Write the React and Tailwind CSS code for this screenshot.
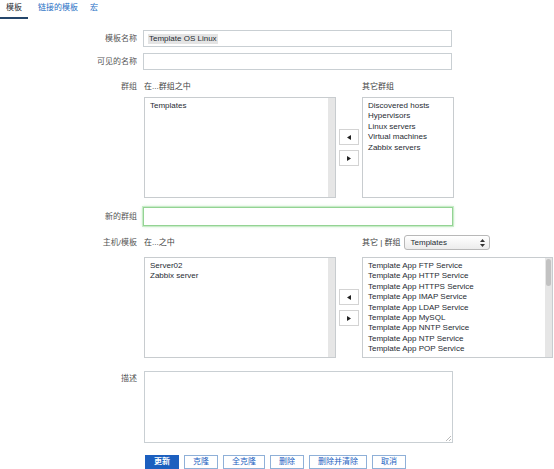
import React from "react";

const groupsIn = ["Templates"];
const groupsOther = ["Discovered hosts", "Hypervisors", "Linux servers", "Virtual machines", "Zabbix servers"];
const hostsIn = ["Server02", "Zabbix server"];
const hostsOther = [
  "Template App FTP Service",
  "Template App HTTP Service",
  "Template App HTTPS Service",
  "Template App IMAP Service",
  "Template App LDAP Service",
  "Template App MySQL",
  "Template App NNTP Service",
  "Template App NTP Service",
  "Template App POP Service",
  "Template App SMTP Service",
];

const Label = ({ children, className = "" }) => (
  <div className={`w-[137px] shrink-0 text-right text-[#555] ${className}`}>{children}</div>
);

const ListBox = ({ items, width, track = true, thumb = false }) => (
  <div className={`relative h-[101px] ${width} shrink-0 overflow-hidden border border-[#c8cccf] bg-white`}>
    <div className="pl-[5px] pt-[3px] leading-[10.4px] text-[#1f2c33]">
      {items.map((it) => (
        <div key={it} className="whitespace-nowrap">{it}</div>
      ))}
    </div>
    {track && <div className="absolute right-0 top-0 h-full w-[7px] bg-[#e6e6e6]" />}
    {thumb && <div className="absolute right-[1px] top-[1px] h-[27px] w-[5px] rounded-[3px] bg-[#c2c2c2]" />}
  </div>
);

const ArrowBtn = ({ dir }) => (
  <div className="flex h-[16px] w-[20px] items-center justify-center border border-[#d3d3d3] bg-white">
    <svg width="4" height="5" viewBox="0 0 4 5">
      {dir === "left" ? <polygon points="4,0 4,5 0,2.5" fill="#222" /> : <polygon points="0,0 0,5 4,2.5" fill="#222" />}
    </svg>
  </div>
);

const Mover = () => (
  <div className="flex w-[26px] shrink-0 flex-col items-center justify-center gap-[5px]">
    <ArrowBtn dir="left" />
    <ArrowBtn dir="right" />
  </div>
);

const Btn = ({ children, primary }) => (
  <div
    className={
      primary
        ? "h-[14px] border border-[#1c5fbf] bg-[#1c5fbf] px-[8px] leading-[12px] font-bold text-white"
        : "h-[14px] border border-[#8fb0d8] bg-white px-[8px] leading-[12px] text-[#1c5fbf]"
    }
  >
    {children}
  </div>
);

export default function App() {
  return (
    <div className="h-[469px] w-[554px] overflow-hidden bg-white font-['Liberation_Sans','Noto_Sans_CJK_SC',sans-serif] text-[8px] leading-[10px] text-[#1f2c33]">
      {/* tabs */}
      <div className="flex h-[19px] items-start">
        <div className="h-[19px] border-b-2 border-[#24466b] px-[6px] pt-[3px] text-[#1f2c33]">模板</div>
        <div className="ml-[10px] pt-[3px] text-[#1f6fc5]">链接的模板</div>
        <div className="ml-[12px] pt-[3px] text-[#1f6fc5]">宏</div>
      </div>

      {/* template name */}
      <div className="mt-[11px] flex items-center gap-[6px]">
        <Label>模板名称</Label>
        <div className="flex h-[17px] w-[309px] items-center border border-[#c9cfd3] bg-white pl-[4px]">
          <span className="bg-[#e4e4e4] px-[1px]">Template OS Linux</span>
        </div>
      </div>

      {/* visible name */}
      <div className="mt-[6px] flex items-center gap-[6px]">
        <Label>可见的名称</Label>
        <div className="h-[17px] w-[309px] border border-[#c9cfd3] bg-white" />
      </div>

      {/* groups */}
      <div className="mt-[12px] flex items-start gap-[6px]">
        <Label>群组</Label>
        <div className="flex">
          <div className="ml-[1px] flex flex-col">
            <div className="mb-[5px] text-[#444]">在...群组之中</div>
            <ListBox items={groupsIn} width="w-[192px]" />
          </div>
          <div className="flex flex-col">
            <div className="mb-[5px] h-[10px]" />
            <div className="flex h-[101px]">
              <Mover />
            </div>
          </div>
          <div className="flex flex-col">
            <div className="mb-[5px] text-[#444]">其它群组</div>
            <ListBox items={groupsOther} width="w-[92px]" track={false} />
          </div>
        </div>
      </div>

      {/* new group */}
      <div className="mt-[9px] flex items-center gap-[6px]">
        <Label>新的群组</Label>
        <div className="h-[19px] w-[310px] border border-[#94d394] bg-white shadow-[0_0_0_1px_#c8ecc8,0_0_3px_#a8dea8]" />
      </div>

      {/* hosts / templates */}
      <div className="mt-[9px] flex items-start gap-[6px]">
        <Label className="pt-[3px]">主机/模板</Label>
        <div className="flex">
          <div className="ml-[1px] flex flex-col">
            <div className="mb-[7px] flex h-[15px] items-center text-[#444]">在...之中</div>
            <ListBox items={hostsIn} width="w-[192px]" />
          </div>
          <div className="flex flex-col">
            <div className="mb-[7px] h-[15px]" />
            <div className="flex h-[101px]">
              <Mover />
            </div>
          </div>
          <div className="flex flex-col">
            <div className="mb-[7px] flex h-[15px] items-center gap-[3px] text-[#444]">
              <span>其它 | 群组</span>
              <div className="relative flex h-[15px] w-[86px] items-center rounded-[3px] border border-[#b8b8b8] bg-gradient-to-b from-white to-[#ececec] pl-[6px] text-[#1f2c33]">
                Templates
                <svg className="absolute right-[4px] top-[3px]" width="5" height="8" viewBox="0 0 5 8">
                  <polygon points="0,3 5,3 2.5,0" fill="#333" />
                  <polygon points="0,5 5,5 2.5,8" fill="#333" />
                </svg>
              </div>
            </div>
            <ListBox items={hostsOther} width="w-[191px]" track={true} thumb={true} />
          </div>
        </div>
      </div>

      {/* description */}
      <div className="mt-[13px] flex items-start gap-[6px]">
        <Label className="pt-[3px]">描述</Label>
        <div className="relative ml-[1px] h-[72px] w-[309px] border border-[#c9cfd3] bg-white">
          <svg className="absolute bottom-[1px] right-[1px]" width="6" height="6" viewBox="0 0 6 6">
            <line x1="6" y1="1" x2="1" y2="6" stroke="#aaa" strokeWidth="0.8" />
            <line x1="6" y1="4" x2="4" y2="6" stroke="#aaa" strokeWidth="0.8" />
          </svg>
        </div>
      </div>

      {/* buttons */}
      <div className="ml-[145px] mt-[12px] flex gap-[5px]">
        <Btn primary>更新</Btn>
        <Btn>克隆</Btn>
        <Btn>全克隆</Btn>
        <Btn>删除</Btn>
        <Btn>删除并清除</Btn>
        <Btn>取消</Btn>
      </div>
    </div>
  );
}
